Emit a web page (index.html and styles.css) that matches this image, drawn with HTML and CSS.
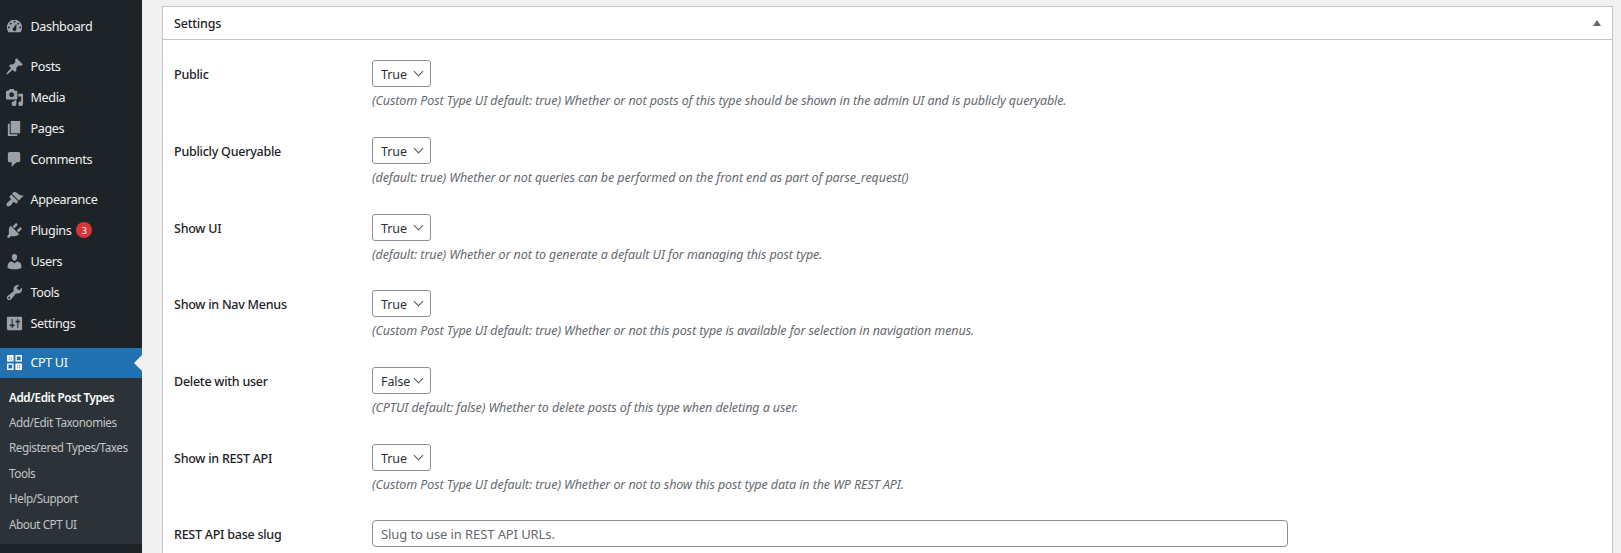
FILE: index.html
```html
<!DOCTYPE html>
<html lang="en">
<head>
<meta charset="utf-8">
<title>Settings</title>
<link rel="stylesheet" href="styles.css">
</head>
<body>
<div class="app">
<nav class="side">
  <ul class="menu first">
    <li><svg viewBox="0 0 20 20"><path fill-rule="evenodd" d="M3.76 16h12.48c1.1-1.37 1.76-3.11 1.76-5 0-4.42-3.58-8-8-8s-8 3.58-8 8c0 1.89.66 3.63 1.76 5zM10 4c.55 0 1 .45 1 1s-.45 1-1 1-1-.45-1-1 .45-1 1-1zM6 6c.55 0 1 .45 1 1s-.45 1-1 1-1-.45-1-1 .45-1 1-1zm8 0c.55 0 1 .45 1 1s-.45 1-1 1-1-.45-1-1 .45-1 1-1zm-5.37 5.55L12 7v6c0 1.1-.9 2-2 2s-2-.9-2-2c0-.57.24-1.08.63-1.45zM4 10c.55 0 1 .45 1 1s-.45 1-1 1-1-.45-1-1 .45-1 1-1zm12 0c.55 0 1 .45 1 1s-.45 1-1 1-1-.45-1-1 .45-1 1-1z"/></svg><span>Dashboard</span></li>
  </ul>
  <ul class="menu">
    <li><svg viewBox="0 0 20 20"><path d="M10.44 3.02l1.82-1.82 6.36 6.35-1.83 1.82c-1.05-.68-2.48-.57-3.41.36l-.75.75c-.92.93-1.04 2.35-.35 3.41l-1.83 1.82-2.41-2.41-2.8 2.79c-.42.42-3.38 2.71-3.8 2.29s1.86-3.39 2.28-3.81l2.79-2.79L4.1 9.36l1.83-1.82c1.05.69 2.48.57 3.4-.36l.75-.75c.93-.92 1.05-2.35.36-3.41z"/></svg><span>Posts</span></li>
    <li><svg viewBox="0 0 20 20"><path fill-rule="evenodd" d="M13 11V4c0-.55-.45-1-1-1h-1.67L9 1H5L3.67 3H2c-.55 0-1 .45-1 1v7c0 .55.45 1 1 1h10c.55 0 1-.45 1-1zM7 4.5c1.38 0 2.5 1.12 2.5 2.5S8.38 9.5 7 9.5 4.5 8.38 4.5 7 5.62 4.5 7 4.5zM14 6h5v10.5c0 1.38-1.12 2.5-2.5 2.5S14 17.88 14 16.5s1.12-2.5 2.5-2.5c.17 0 .34.02.5.05V9h-3V6zm-4 8.05V13h2v3.5c0 1.38-1.12 2.5-2.5 2.5S7 17.88 7 16.5 8.12 14 9.5 14c.17 0 .34.02.5.05z"/></svg><span>Media</span></li>
    <li><svg viewBox="0 0 20 20"><path d="M6 15V2h10v13H6zm-1 1h8v2H3V5h2v11z"/></svg><span>Pages</span></li>
    <li><svg viewBox="0 0 20 20"><path d="M5 2h9c1.1 0 2 .9 2 2v7c0 1.1-.9 2-2 2h-2l-5 5v-5H5c-1.1 0-2-.9-2-2V4c0-1.1.9-2 2-2z"/></svg><span>Comments</span></li>
  </ul>
  <ul class="menu">
    <li><svg viewBox="0 0 20 20"><path d="M14.48 11.06L7.41 3.99l1.5-1.5c.5-.56 2.3-.47 3.51.32 1.21.8 1.43 1.28 2.91 2.1 1.18.64 2.45 1.26 4.45.85zM13.77 11.77L6.7 4.7 4.93 6.47c-.39.39-.39 1.02 0 1.41l1.06 1.06c.39.39.39 1.03 0 1.42-.6.6-1.43 1.11-2.21 1.69-.35.26-.7.53-1.01.84-1.43 1.43-1.4 3.13-.63 3.9s2.47.8 3.9-.63c.31-.31.58-.66.84-1.01.58-.78 1.09-1.61 1.69-2.21.39-.39 1.03-.39 1.42 0l1.06 1.06c.39.39 1.02.39 1.41 0z"/></svg><span>Appearance</span></li>
    <li><svg viewBox="0 0 20 20"><path d="M13.11 4.36L9.87 7.6 8 5.73l3.24-3.24c.35-.34 1.05-.2 1.56.32.52.51.66 1.21.31 1.55zm-8 1.77l.91-1.12 9.01 9.01-1.19.84c-.71.71-2.63 1.16-3.82 1.16H6.14L4.9 17.26c-.59.59-1.54.59-2.12 0-.59-.58-.59-1.53 0-2.12l1.24-1.24v-3.88c0-1.13.4-3.19 1.09-3.89zm7.26 3.97l3.24-3.24c.34-.35 1.04-.21 1.55.31.52.51.66 1.21.31 1.55l-3.24 3.25z"/></svg><span>Plugins</span><b class="badge">3</b></li>
    <li><svg viewBox="0 0 20 20"><path d="M10 9.25c-2.27 0-2.73-3.44-2.73-3.44C7 4.02 7.82 2 9.97 2c2.16 0 2.98 2.02 2.71 3.81 0 0-.41 3.44-2.68 3.44zm0 2.57L12.72 10c2.39 0 4.52 2.33 4.52 4.53v2.49s-3.65 1.13-7.24 1.13c-3.65 0-7.24-1.13-7.24-1.13v-2.49c0-2.25 1.94-4.48 4.47-4.48z"/></svg><span>Users</span></li>
    <li><svg viewBox="0 0 20 20"><path fill-rule="evenodd" d="M16.68 9.77c-1.34 1.34-3.3 1.67-4.95.99l-5.41 6.52c-.99.99-2.59.99-3.58 0s-.99-2.59 0-3.57l6.52-5.42c-.68-1.65-.35-3.61.99-4.95 1.28-1.28 3.12-1.62 4.72-1.06l-2.89 2.89 2.82 2.82 2.86-2.87c.53 1.58.18 3.39-1.08 4.65zM3.81 16.21c.4.39 1.04.39 1.43 0 .4-.4.4-1.04 0-1.43-.39-.4-1.03-.4-1.43 0-.39.39-.39 1.03 0 1.43z"/></svg><span>Tools</span></li>
    <li><svg viewBox="0 0 20 20"><path fill-rule="evenodd" d="M18 16V4c0-.55-.45-1-1-1H3c-.55 0-1 .45-1 1v12c0 .55.45 1 1 1h14c.55 0 1-.45 1-1zM8 11h1c.55 0 1 .45 1 1s-.45 1-1 1H8v1.5c0 .28-.22.5-.5.5s-.5-.22-.5-.5V13H6c-.55 0-1-.45-1-1s.45-1 1-1h1V5.5c0-.28.22-.5.5-.5s.5.22.5.5V11zm5-2h-1c-.55 0-1-.45-1-1s.45-1 1-1h1V5.5c0-.28.22-.5.5-.5s.5.22.5.5V7h1c.55 0 1 .45 1 1s-.45 1-1 1h-1v5.5c0 .28-.22.5-.5.5s-.5-.22-.5-.5V9z"/></svg><span>Settings</span></li>
  </ul>
  <div class="current">
    <svg class="cpt" viewBox="0 0 16 16"><path fill-rule="evenodd" d="M0 0h7v7H0zM2 2v1h1V2zM4 2v1h1V2zM2 4v1h1V4zM4 4v1h1V4zM9 0h7v7H9zM10.500 1.500v4h4v-4zM0 9h7v7H0zM1.500 10.500v4h4v-4zM9 9h7v7H9zM11 11v1h1v-1zM13 11v1h1v-1zM11 13v1h1v-1zM13 13v1h1v-1z"/></svg><span>CPT UI</span>
  </div>
  <ul class="sub">
    <li class="on">Add/Edit Post Types</li>
    <li>Add/Edit Taxonomies</li>
    <li>Registered Types/Taxes</li>
    <li>Tools</li>
    <li>Help/Support</li>
    <li>About CPT UI</li>
  </ul>
</nav>
<main class="main">
  <section class="box">
    <header class="head"><h2>Settings</h2><i class="toggle"></i></header>
    <div class="rows">
      <div class="row"><label>Public</label><div><div class="sel">True</div><p>(Custom Post Type UI default: true) Whether or not posts of this type should be shown in the admin UI and is publicly queryable.</p></div></div>
      <div class="row"><label>Publicly Queryable</label><div><div class="sel">True</div><p>(default: true) Whether or not queries can be performed on the front end as part of parse_request()</p></div></div>
      <div class="row"><label>Show UI</label><div><div class="sel">True</div><p>(default: true) Whether or not to generate a default UI for managing this post type.</p></div></div>
      <div class="row"><label>Show in Nav Menus</label><div><div class="sel">True</div><p>(Custom Post Type UI default: true) Whether or not this post type is available for selection in navigation menus.</p></div></div>
      <div class="row"><label>Delete with user</label><div><div class="sel">False</div><p>(CPTUI default: false) Whether to delete posts of this type when deleting a user.</p></div></div>
      <div class="row"><label>Show in REST API</label><div><div class="sel">True</div><p>(Custom Post Type UI default: true) Whether or not to show this post type data in the WP REST API.</p></div></div>
      <div class="row last"><label>REST API base slug</label><div><div class="inp">Slug to use in REST API URLs.</div></div></div>
    </div>
  </section>
</main>
</div>
</body>
</html>
```
FILE: styles.css
```css
* { box-sizing: border-box; }
html, body { margin: 0; height: 553px; overflow: hidden; }
body { background: #f0f0f1; color: #2c3338; font: 13px/19px "Noto Sans", "Open Sans", sans-serif; }
ul { list-style: none; margin: 0; padding: 0; }
.app { display: flex; height: 553px; }
.side { width: 142px; flex: none; background: #1d2327; color: #f0f0f1; padding-top: 11px; }
.menu { margin-bottom: 9.6px; }
.menu.first { margin-bottom: 9px; }
.menu li { display: flex; align-items: center; height: 30.9px; padding-left: 5px; }
.menu svg { width: 19px; height: 19px; fill: #9ca1a7; flex: none; margin-right: 6.5px; }
.menu span, .current span { font-size: 12.6px; letter-spacing: -.38px; }
.badge { display: inline-flex; align-items: center; justify-content: center; width: 16px; height: 16px; margin-left: 5px; border-radius: 50%; background: #d63638; color: #fff; font-size: 9px; line-height: 1; font-weight: 400; }
.current { position: relative; display: flex; align-items: center; height: 29.5px; padding-left: 7px; background: #2271b1; color: #fff; }
.current svg { width: 15px; height: 15px; fill: #fff; flex: none; margin-right: 8.5px; }
.current::after { content: ""; position: absolute; right: 0; top: 7px; border: 8px solid transparent; border-right-color: #f0f0f1; border-left: 0; }
.sub { background: #2c3338; height: 166.5px; padding-top: 7px; color: #c3c4c7; font-size: 11.7px; }
.sub li { height: 25.4px; line-height: 25px; padding-left: 9px; letter-spacing: -.43px; white-space: nowrap; }
.sub .on { color: #fff; font-weight: 600; letter-spacing: -.4px; }
.main { flex: 1; display: flex; flex-direction: column; padding: 6px 8px 0 20px; min-width: 0; }
.box { flex: 1; overflow: hidden; background: #fff; border: 1px solid #c3c4c7; border-bottom: 0; }
.head { display: flex; align-items: center; justify-content: space-between; height: 33px; border-bottom: 1px solid #c3c4c7; padding: 0 12px 0 11px; }
h2 { margin: 0; font-size: 12.5px; font-weight: 500; color: #1d2327; letter-spacing: -.2px; }
.toggle { width: 0; height: 0; margin-right: -1px; border: 4px solid transparent; border-top: 0; border-bottom: 6px solid #646970; }
.rows { padding-top: 20.4px; }
.row { display: flex; height: 76.65px; }
.row.last { height: auto; }
.row label { width: 209px; flex: none; padding-left: 11px; padding-top: 5px; color: #1d2327; font-size: 12.5px; font-weight: 500; letter-spacing: -.25px; }
.sel { position: relative; width: 59px; height: 27px; border: 1px solid #8c8f94; border-radius: 3px; padding: 4px 0 0 8px; font-size: 12.5px; letter-spacing: -.1px; }
.sel::after { content: ""; position: absolute; right: 8px; top: 7px; width: 6px; height: 6px; border: solid #50575e; border-width: 0 1.8px 1.8px 0; transform: rotate(45deg); }
p { margin: 4px 0 0; font-size: 12.5px; font-style: italic; color: #646970; line-height: 20px; letter-spacing: -.09px; white-space: nowrap; }
.inp { width: 916px; height: 27px; border: 1px solid #8c8f94; border-radius: 4px; padding: 4px 0 0 8px; font-size: 13px; color: #646970; letter-spacing: -.1px; }
```
